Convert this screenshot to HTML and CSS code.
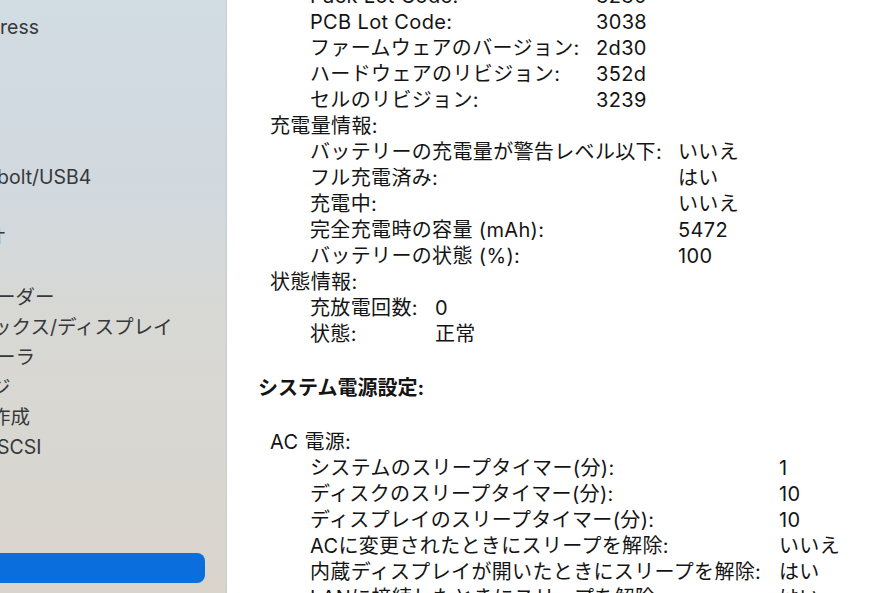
FILE: index.html
```html
<!DOCTYPE html>
<html lang="ja">
<head>
<meta charset="utf-8">
<title>システム情報 - 電源</title>
<link rel="stylesheet" href="styles.css">
</head>
<body>
<div class="window">
  <aside class="sidebar">
    <ul class="nav">
      <li class="item"><span class="label">ress</span></li>
      <li class="item"></li>
      <li class="item"></li>
      <li class="item"></li>
      <li class="item"></li>
      <li class="item"><span class="label s3">bolt/USB4</span></li>
      <li class="item"></li>
      <li class="item"><span class="label s13">オ</span></li>
      <li class="item"></li>
      <li class="item"><span class="label s4">ーダー</span></li>
      <li class="item"><span class="label s8">ックス/ディスプレイ</span></li>
      <li class="item"><span class="label s4">ーラ</span></li>
      <li class="item"><span class="label s9">ジ</span></li>
      <li class="item"><span class="label s9">作成</span></li>
      <li class="item"><span class="label s3">SCSI</span></li>
      <li class="item"></li>
      <li class="item"></li>
      <li class="item"></li>
      <li class="item selected"><span class="label"></span></li>
    </ul>
  </aside>
  <main class="content">
    <div class="doc">
      <dl class="kv kv-a">
        <dt>Pack Lot Code:</dt><dd>3230</dd>
        <dt>PCB Lot Code:</dt><dd>3038</dd>
        <dt>ファームウェアのバージョン:</dt><dd>2d30</dd>
        <dt>ハードウェアのリビジョン:</dt><dd>352d</dd>
        <dt>セルのリビジョン:</dt><dd>3239</dd>
      </dl>
      <div class="group-title">充電量情報:</div>
      <dl class="kv kv-b">
        <dt>バッテリーの充電量が警告レベル以下:</dt><dd>いいえ</dd>
        <dt>フル充電済み:</dt><dd>はい</dd>
        <dt>充電中:</dt><dd>いいえ</dd>
        <dt>完全充電時の容量 (mAh):</dt><dd>5472</dd>
        <dt>バッテリーの状態 (%):</dt><dd>100</dd>
      </dl>
      <div class="group-title">状態情報:</div>
      <dl class="kv kv-c">
        <dt>充放電回数:</dt><dd>0</dd>
        <dt>状態:</dt><dd>正常</dd>
      </dl>
      <h2 class="section-title">システム電源設定:</h2>
      <div class="group-title">AC 電源:</div>
      <dl class="kv kv-d">
        <dt>システムのスリープタイマー(分):</dt><dd>1</dd>
        <dt>ディスクのスリープタイマー(分):</dt><dd>10</dd>
        <dt>ディスプレイのスリープタイマー(分):</dt><dd>10</dd>
        <dt>ACに変更されたときにスリープを解除:</dt><dd>いいえ</dd>
        <dt>内蔵ディスプレイが開いたときにスリープを解除:</dt><dd>はい</dd>
        <dt>LANに接続したときにスリープを解除:</dt><dd>はい</dd>
      </dl>
    </div>
  </main>
</div>
</body>
</html>
```

FILE: styles.css
```css
html, body {
  margin: 0;
  padding: 0;
  width: 881px;
  height: 593px;
  overflow: hidden;
  background: #ffffff;
}

body {
  font-family: "Inter", "Noto Sans CJK JP", sans-serif;
  color: #141414;
}

.window {
  display: flex;
  width: 881px;
  height: 593px;
  overflow: hidden;
}

.sidebar {
  flex: 0 0 226px;
  height: 593px;
  overflow: hidden;
  border-right: 1px solid #c9cccd;
  background: linear-gradient(180deg, #d2dce3 0%, #d1d9df 30%, #d8d8d4 55%, #d9d5cd 100%);
}

.nav {
  list-style: none;
  margin: 0;
  padding: 12px 0 0 0;
}

.item {
  height: 30px;
  line-height: 30px;
  font-size: 19.5px;
  color: #36383a;
  white-space: nowrap;
  overflow: hidden;
}

.label {
  display: inline-block;
}

.s3 { margin-left: -3px; }
.s4 { margin-left: -4px; }
.s8 { margin-left: -8px; }
.s9 { margin-left: -9px; }
.s13 { margin-left: -13px; }

.selected {
  margin: 1px 21px 0 -10px;
  border-radius: 8px;
  background: #0a6fdc;
}

.content {
  flex: 1 1 auto;
  height: 593px;
  overflow: hidden;
  background: #ffffff;
}

.doc {
  margin-top: -17px;
  padding-left: 31px;
  font-size: 20px;
  line-height: 26px;
  letter-spacing: 0.35px;
}

.kv {
  display: grid;
  margin: 0;
  padding-left: 52px;
  white-space: nowrap;
}

.kv dt, .kv dd {
  margin: 0;
  height: 26px;
}

.kv-a { grid-template-columns: 286px auto; }
.kv-b { grid-template-columns: 368px auto; }
.kv-c { grid-template-columns: 125px auto; }
.kv-d { grid-template-columns: 469px auto; }

.group-title {
  padding-left: 12px;
  height: 26px;
}

.section-title {
  margin: 28px 0 28px 0;
  font-size: 20px;
  line-height: 26px;
  font-weight: 700;
  letter-spacing: 0;
}
```
